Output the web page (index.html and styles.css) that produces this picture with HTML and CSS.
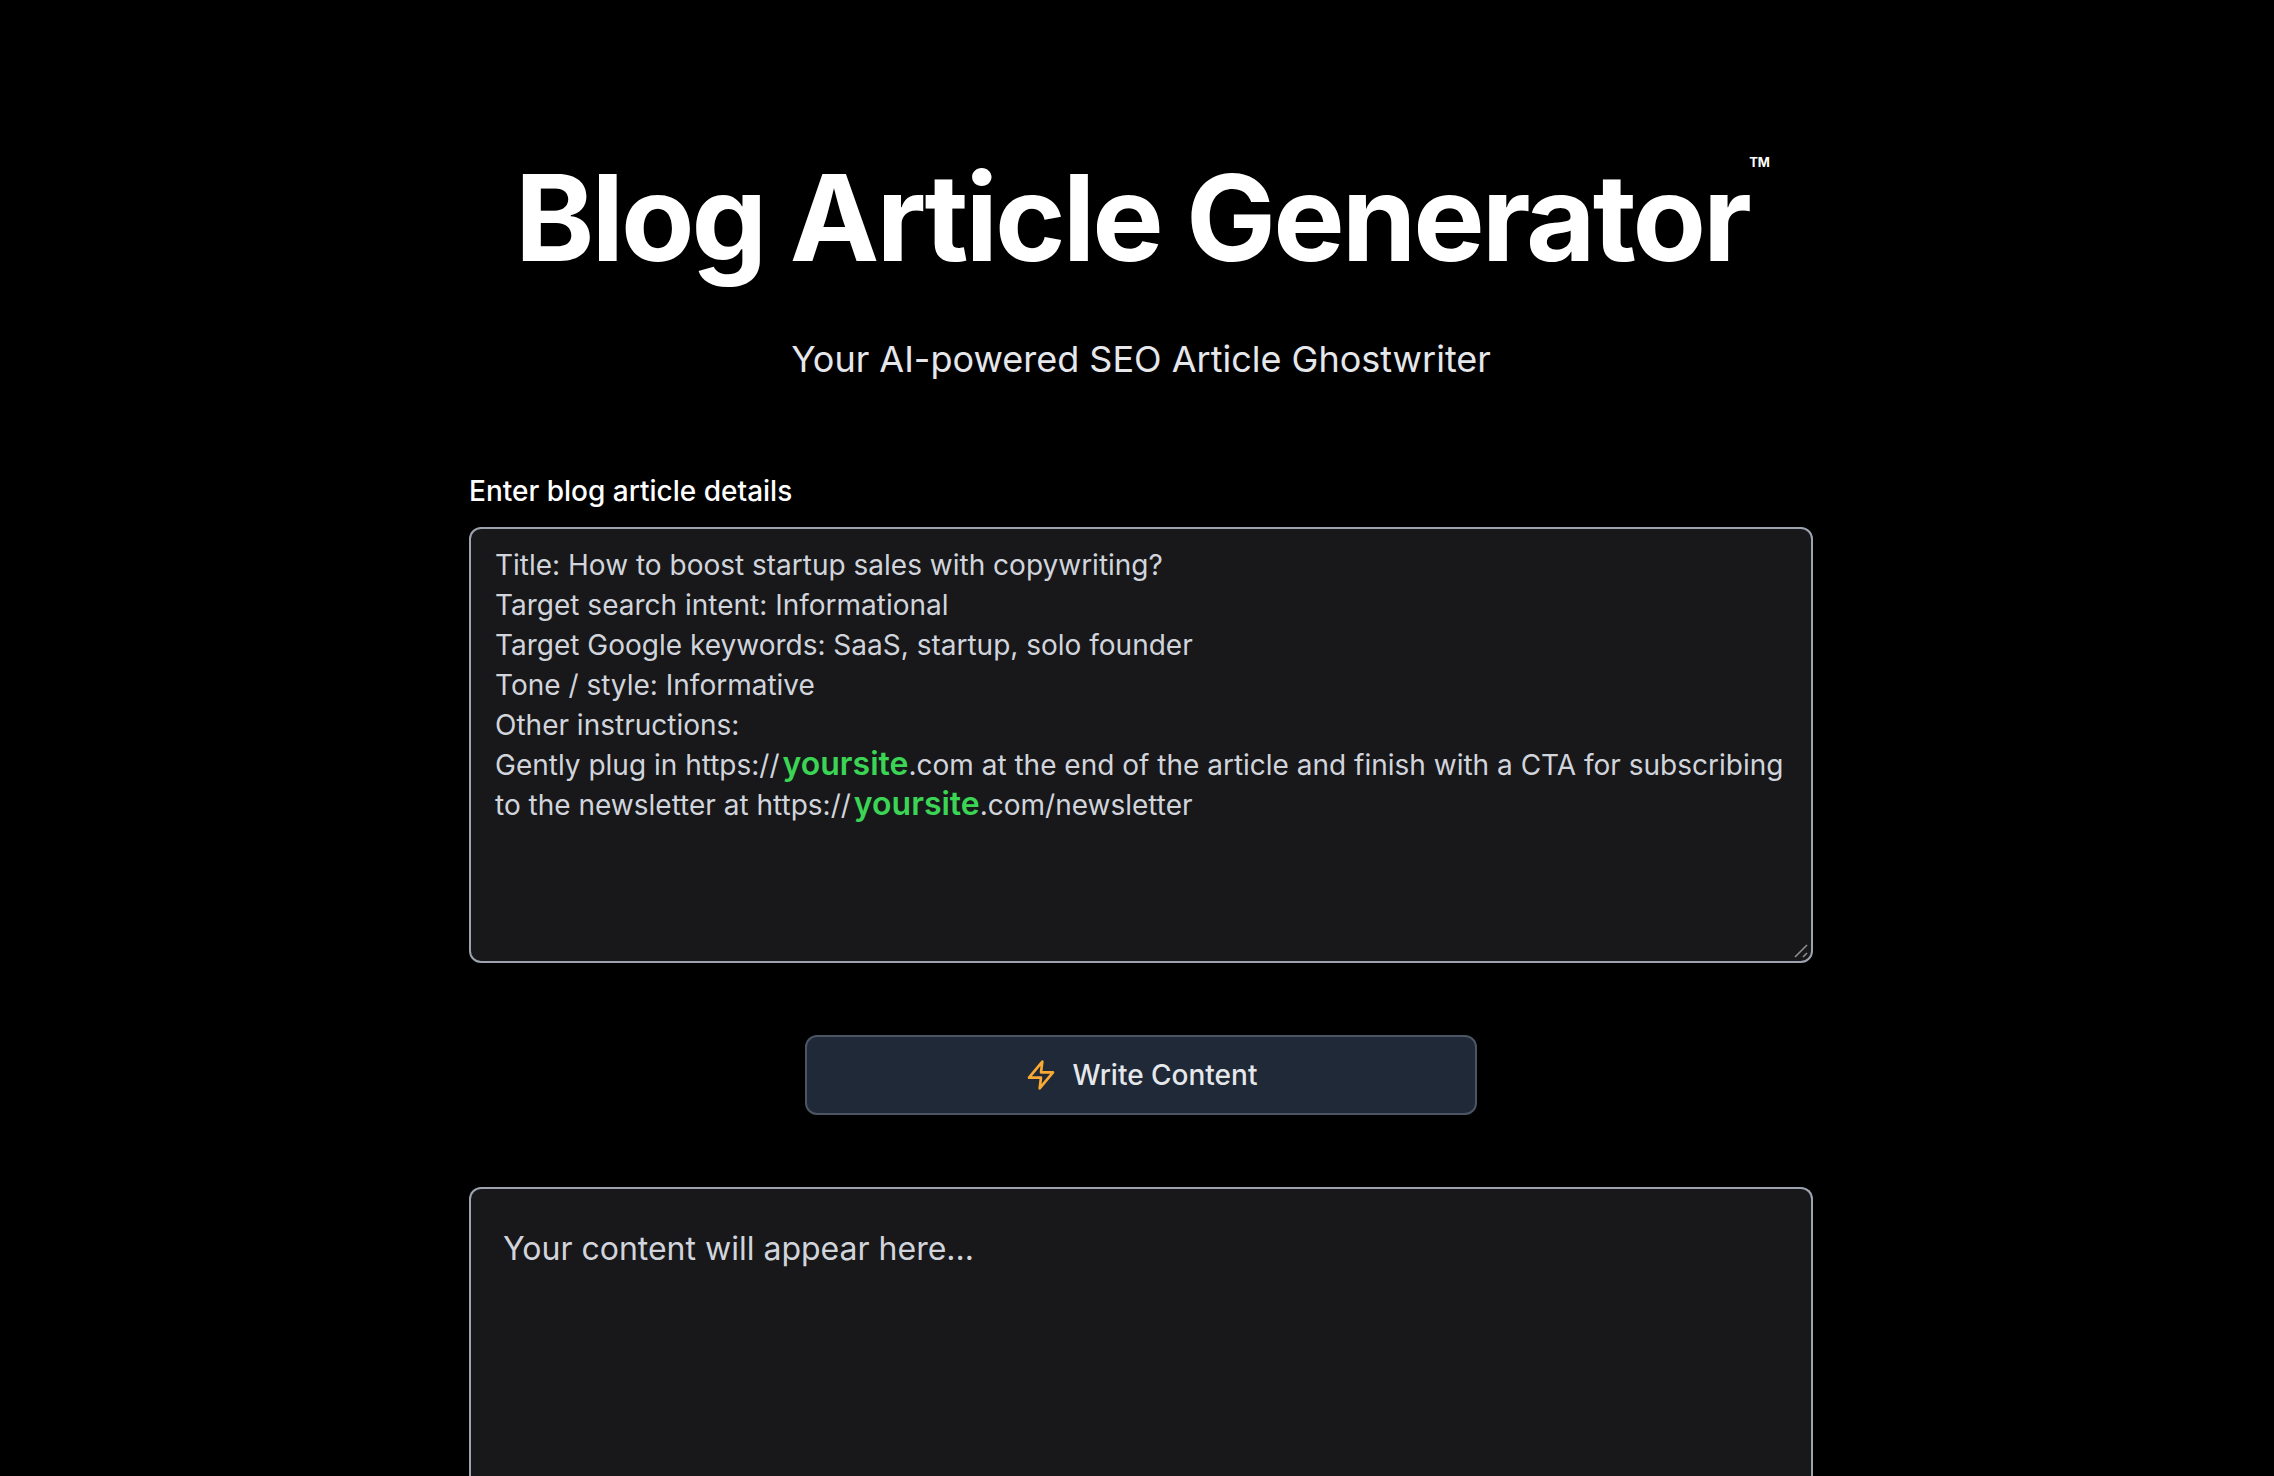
FILE: index.html
```html
<!DOCTYPE html>
<html>
<head>
  <title>Blog Article Generator</title>
  <link rel="stylesheet" href="styles.css">
</head>
<body>
<div class="page">
  <header class="hero">
    <h1 class="hero-title">Blog Article Generator<span class="trademark">TM</span></h1>
    <p class="hero-subtitle">Your AI-powered SEO Article Ghostwriter</p>
  </header>

  <form class="generator">
    <label class="details-label">Enter blog article details</label>

    <!-- Div instead of textarea so the highlighted words can be coloured -->
    <div class="details-input">
      <div>Title: How to boost startup sales with copywriting?</div>
      <div>Target search intent: Informational</div>
      <div>Target Google keywords: SaaS, startup, solo founder</div>
      <div>Tone / style: Informative</div>
      <div>Other instructions:</div>
      <div>Gently plug in https://<span class="highlight">yoursite</span>.com at the end of the article and finish with a CTA for subscribing to the newsletter at https://<span class="highlight">yoursite</span>.com/newsletter</div>
      <svg class="resize-grip" viewBox="0 0 16 16" fill="none" stroke="currentColor" stroke-width="1.6">
        <path d="M2 14 L14 2"></path>
        <path d="M10 14 L14 10"></path>
      </svg>
    </div>

    <div class="form-buttons">
      <button type="button" class="write-button">
        <svg class="zap-icon" viewBox="0 0 24 24" fill="none" stroke="currentColor" stroke-width="2" stroke-linecap="round" stroke-linejoin="round">
          <polygon points="13 2 3 14 12 14 11 22 21 10 12 10 13 2"></polygon>
        </svg>
        Write Content
      </button>
    </div>

    <div class="output-box">Your content will appear here...</div>
  </form>
</div>
</body>
</html>
```

FILE: styles.css
```css
html,
body {
  margin: 0;
  height: 100%;
  background-color: #000;
  overflow: hidden;
}

body {
  font-family: Inter, "Liberation Sans", sans-serif;
  color: #fff;
}

.page {
  display: flex;
  flex-direction: column;
  width: 1344px;
  height: calc(100% - 146px);
  margin: 0 auto;
  padding: 146px 0 0 8px;
}

/* Heading */

.hero {
  text-align: center;
}

.hero-title {
  position: relative;
  display: inline-block;
  margin: 0;
  padding-right: 18px;
  font-size: 120px;
  line-height: 144px;
  font-weight: 700;
  letter-spacing: -3px;
}

.trademark {
  position: absolute;
  top: 6px;
  right: -3px;
  font-size: 13px;
  line-height: 20px;
  letter-spacing: 0;
}

.hero-subtitle {
  margin: 41px 0 0;
  font-size: 36px;
  line-height: 56px;
  color: #e5e7eb;
}

/* Form */

.generator {
  display: flex;
  flex-direction: column;
  flex: 1;
  margin-top: 84px;
}

.details-label {
  display: block;
  margin-bottom: 16px;
  font-size: 28px;
  line-height: 40px;
  font-weight: 500;
}

.details-input {
  position: relative;
  height: 400px;
  padding: 16px 24px;
  border: 2px solid #9ca3af;
  border-radius: 12px;
  background-color: #18181b;
  color: #d1d5db;
  font-size: 28px;
  line-height: 40px;
}

.resize-grip {
  position: absolute;
  right: 2px;
  bottom: 2px;
  width: 16px;
  height: 16px;
  color: #8f8f8f;
}

.highlight {
  margin-left: 3px;
  font-size: 32px;
  line-height: 0;
  font-weight: 600;
  color: #3bd455;
}

.form-buttons {
  display: flex;
  justify-content: center;
  margin-top: 72px;
}

.write-button {
  display: flex;
  align-items: center;
  justify-content: center;
  gap: 16px;
  width: 672px;
  height: 80px;
  border: 2px solid #4b5563;
  border-radius: 12px;
  background-color: #1f2937;
  color: #e5e7eb;
  font-family: inherit;
  font-size: 28px;
  font-weight: 500;
}

.zap-icon {
  width: 32px;
  height: 32px;
  color: #f9a833;
}

/* Runs off the bottom of the window, so no bottom border */
.output-box {
  flex: 1;
  margin-top: 72px;
  padding: 38px 32px 0;
  border: 2px solid #9ca3af;
  border-bottom: none;
  border-radius: 12px 12px 0 0;
  background-color: #18181b;
  color: #d1d5db;
  font-size: 32px;
  line-height: 44px;
}
```
